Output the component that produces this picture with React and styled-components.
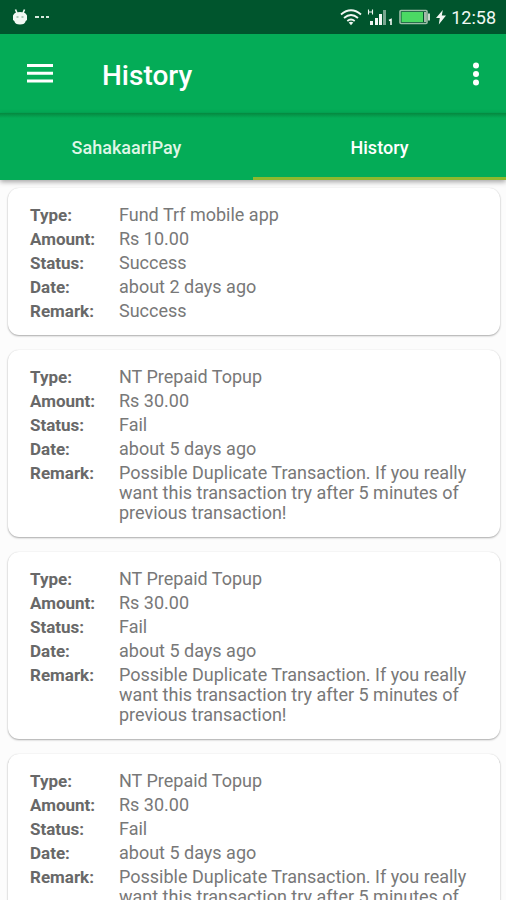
import React from "react";
import styled, { createGlobalStyle } from "styled-components";

const GlobalStyle = createGlobalStyle`
  * { box-sizing: border-box; }
  body {
    margin: 0;
    background: #fcfcfc;
    font-family: Roboto, "Liberation Sans", sans-serif;
  }
`;

const Screen = styled.div`
  display: flex;
  flex-direction: column;
  height: 100vh;
  overflow: hidden;
`;

const StatusBar = styled.div`
  display: flex;
  align-items: center;
  justify-content: space-between;
  flex: none;
  height: 34px;
  padding: 0 10px 0 12px;
  background: #00552d;
  color: #f1f8f3;
`;

const StatusGroup = styled.div`
  display: flex;
  align-items: center;
  gap: ${({ $gap }) => $gap}px;
`;

const Clock = styled.time`
  font-size: 18px;
  line-height: 34px;
  padding-top: 2px;
`;

const AppBar = styled.header`
  display: flex;
  align-items: center;
  flex: none;
  height: 79px;
  padding: 0 14px 0 20px;
  background: #04ac57;
  color: #fff;
`;

const IconButton = styled.button`
  display: flex;
  align-items: center;
  justify-content: center;
  width: 40px;
  height: 48px;
  padding: 0;
  border: 0;
  background: none;
  color: inherit;
  cursor: pointer;
`;

const SlimIconButton = styled(IconButton)`
  width: 32px;
`;

const Title = styled.h1`
  flex: 1;
  margin: 0;
  padding: 4px 0 0 42px;
  font-size: 28px;
  line-height: 32px;
  font-weight: 500;
`;

const Tabs = styled.nav`
  display: flex;
  flex: none;
  height: 67px;
  background: linear-gradient(#05883f, #04ac57 5px);
  box-shadow: 0 2px 5px rgba(0, 0, 0, 0.35);
  z-index: 1;
`;

const Tab = styled.button`
  flex: 1;
  padding: 6px 0 0;
  border: 0;
  border-bottom: 3px solid ${({ $active }) => ($active ? "#8db92e" : "transparent")};
  background: none;
  color: ${({ $active }) => ($active ? "#fff" : "#dff6e6")};
  font-family: inherit;
  font-size: 18px;
  line-height: 24px;
  font-weight: 500;
  cursor: pointer;
`;

const HistoryList = styled.main`
  display: flex;
  flex-direction: column;
  flex: 1;
  gap: 15px;
  min-height: 0;
  padding: 8px 6px 8px 8px;
  overflow-y: auto;
  scrollbar-width: none;
`;

const Card = styled.dl`
  display: flex;
  flex-direction: column;
  flex: none;
  gap: 4px;
  margin: 0;
  padding: 17px 22px 14px;
  border-radius: 11px;
  background: #fff;
  box-shadow: 0 1px 2px rgba(0, 0, 0, 0.32), 0 0 1px rgba(0, 0, 0, 0.12);
`;

const Row = styled.div`
  display: grid;
  grid-template-columns: 89px 1fr;
  font-size: 18px;
  line-height: 20px;
`;

const Label = styled.dt`
  color: #686868;
  font-size: 17px;
  font-weight: 700;
`;

const Value = styled.dd`
  margin: 0;
  color: #787878;
`;

const duplicate =
  "Possible Duplicate Transaction. If you really want this transaction try after 5 minutes of previous transaction!";

const failedTopup = {
  Type: "NT Prepaid Topup",
  Amount: "Rs 30.00",
  Status: "Fail",
  Date: "about 5 days ago",
  Remark: duplicate,
};

const transactions = [
  {
    Type: "Fund Trf mobile app",
    Amount: "Rs 10.00",
    Status: "Success",
    Date: "about 2 days ago",
    Remark: "Success",
  },
  failedTopup,
  failedTopup,
  failedTopup,
];

const AndroidIcon = () => (
  <svg width="16" height="18" viewBox="0 0 16 18" fill="currentColor" aria-hidden="true">
    <path d="M3.5 1.5 5 5M12.5 1.5 11 5" stroke="currentColor" strokeWidth="1.6" />
    <path d="M2 6Q3 4 8 4T14 6L15 7.5V12L13.7 13Q13 16.5 8 16.5T2.3 13L1 12V7.5Z" />
    <path d="M4.5 9h2M9.5 9h2" stroke="#6a9a80" strokeWidth="1.2" />
  </svg>
);

const DotsIcon = () => (
  <svg width="16" height="4" viewBox="0 0 16 4" fill="#d5e8dc" aria-hidden="true">
    <path d="M0 1h4v2H0zM6 1h3v2H6zM11 1h3v2h-3z" />
  </svg>
);

const WifiIcon = () => (
  <svg width="22" height="18" viewBox="0 0 22 18" fill="none" stroke="currentColor" strokeWidth="1.8" aria-hidden="true">
    <path d="M1 6.5Q11-2 21 6.5M4 10q7-6 14 0M7.3 13q3.7-3 7.4 0" />
    <path d="m8.7 14.5 2.3 2.7 2.3-2.7Q11 13 8.7 14.5Z" fill="currentColor" stroke="none" />
  </svg>
);

const SignalIcon = () => (
  <svg width="27" height="18" viewBox="0 0 27 18" fill="currentColor" aria-hidden="true">
    <path d="M1.5 1.5v5M5.5 1.5v5M1.5 4h4" stroke="currentColor" strokeWidth="1.1" />
    <path d="M3 13h3v4H3zM8 10h3v7H8zM12 6h3v11h-3z" />
    <path d="M16 2h3v15h-3z" opacity=".5" />
    <path d="M22 12.5 24 11.5V17" fill="none" stroke="currentColor" strokeWidth="1.6" />
  </svg>
);

const BatteryIcon = () => (
  <svg width="32" height="16" viewBox="0 0 32 16" aria-hidden="true">
    <rect x="1" y="1.5" width="27" height="13" rx="1" fill="#00552d" stroke="#9dbda8" strokeWidth="1.6" />
    <path d="M2.5 3H24v10H2.5z" fill="#4bd964" />
    <path d="M25 3h2.5v10H25z" fill="#a6b8ab" />
    <path d="M29 4.5h2v7h-2z" fill="#c6d8cc" />
  </svg>
);

const BoltIcon = () => (
  <svg width="10" height="16" viewBox="0 0 10 16" fill="currentColor" aria-hidden="true">
    <path d="M6.8 1 0 9h3.8L2.8 15.5 10 6.5H5.8Z" />
  </svg>
);

const MenuIcon = () => (
  <svg width="28" height="22" viewBox="0 0 28 22" fill="currentColor" aria-hidden="true">
    <path d="M1 1h26v3H1zM1 8.7h26v3H1zM1 16.5h26v3H1z" />
  </svg>
);

const MoreIcon = () => (
  <svg width="8" height="24" viewBox="0 0 8 24" fill="currentColor" aria-hidden="true">
    <circle cx="4" cy="3.5" r="3" />
    <circle cx="4" cy="12" r="3" />
    <circle cx="4" cy="20.5" r="3" />
  </svg>
);

export default function App() {
  return (
    <Screen>
      <GlobalStyle />
      <StatusBar>
        <StatusGroup $gap={7}>
          <AndroidIcon />
          <DotsIcon />
        </StatusGroup>
        <StatusGroup $gap={5}>
          <WifiIcon />
          <SignalIcon />
          <BatteryIcon />
          <BoltIcon />
          <Clock>12:58</Clock>
        </StatusGroup>
      </StatusBar>
      <AppBar>
        <IconButton type="button" aria-label="Open menu">
          <MenuIcon />
        </IconButton>
        <Title>History</Title>
        <SlimIconButton type="button" aria-label="More options">
          <MoreIcon />
        </SlimIconButton>
      </AppBar>
      <Tabs>
        <Tab type="button">SahakaariPay</Tab>
        <Tab type="button" $active aria-current="page">
          History
        </Tab>
      </Tabs>
      <HistoryList>
        {transactions.map((transaction, index) => (
          <Card key={index}>
            {Object.entries(transaction).map(([label, value]) => (
              <Row key={label}>
                <Label>{label}:</Label>
                <Value>{value}</Value>
              </Row>
            ))}
          </Card>
        ))}
      </HistoryList>
    </Screen>
  );
}
